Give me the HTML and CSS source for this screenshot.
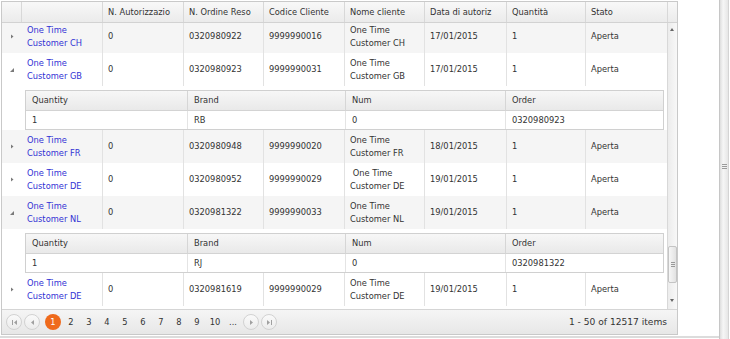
FILE: index.html
```html
<!DOCTYPE html>
<html>
  <head>
    <title>Autorizzazioni reso</title>
    <link rel="stylesheet" href="styles.css">
  </head>
  <body>
    <div class="page">
      <div class="panel">
        <div class="grid">
          <div class="grid-header">
            <table class="grid-table">
              <colgroup>
                <col class="c-hier"><col class="c-name"><col class="c-81"><col class="c-80"><col class="c-81"><col class="c-80"><col class="c-82"><col class="c-79"><col class="c-82">
              </colgroup>
              <thead>
                <tr>
                  <th class="hier"></th>
                  <th></th>
                  <th>N. Autorizzazio</th>
                  <th>N. Ordine Reso</th>
                  <th>Codice Cliente</th>
                  <th>Nome cliente</th>
                  <th>Data di autoriz</th>
                  <th>Quantità</th>
                  <th>Stato</th>
                </tr>
              </thead>
            </table>
            <div class="scroll-head"></div>
          </div>

          <div class="grid-body">
            <div class="grid-content">
              <table class="grid-table scrolled">
                <colgroup>
                  <col class="c-hier"><col class="c-name"><col class="c-81"><col class="c-80"><col class="c-81"><col class="c-80"><col class="c-82"><col class="c-79"><col class="c-82">
                </colgroup>
                <tbody>
                  <tr class="row alt">
                    <td class="hier"><svg class="ico" width="4" height="5" viewBox="0 0 4 5"><path d="M1 0.5L3.5 2.5L1 4.5Z" fill="#7a7a7a"/></svg></td>
                    <td class="name">One Time<br>Customer CH</td>
                    <td>0</td><td>0320980922</td><td>9999990016</td>
                    <td>One Time<br>Customer CH</td>
                    <td>17/01/2015</td><td>1</td><td>Aperta</td>
                  </tr>
                  <tr class="row">
                    <td class="hier"><svg class="ico" width="4" height="4" viewBox="0 0 4 4"><path d="M4 0V4H0Z" fill="#7a7a7a"/></svg></td>
                    <td class="name">One Time<br>Customer GB</td>
                    <td>0</td><td>0320980923</td><td>9999990031</td>
                    <td>One Time<br>Customer GB</td>
                    <td>17/01/2015</td><td>1</td><td>Aperta</td>
                  </tr>
                  <tr class="detail-row">
                    <td class="hier"></td>
                    <td class="detail-cell" colspan="8">
                      <table class="detail-table">
                        <colgroup><col class="d-1"><col class="d-2"><col class="d-3"><col class="d-4"></colgroup>
                        <thead>
                          <tr><th>Quantity</th><th>Brand</th><th>Num</th><th>Order</th></tr>
                        </thead>
                        <tbody>
                          <tr><td>1</td><td>RB</td><td>0</td><td>0320980923</td></tr>
                        </tbody>
                      </table>
                    </td>
                  </tr>
                  <tr class="row alt">
                    <td class="hier"><svg class="ico" width="4" height="5" viewBox="0 0 4 5"><path d="M1 0.5L3.5 2.5L1 4.5Z" fill="#7a7a7a"/></svg></td>
                    <td class="name">One Time<br>Customer FR</td>
                    <td>0</td><td>0320980948</td><td>9999990020</td>
                    <td>One Time<br>Customer FR</td>
                    <td>18/01/2015</td><td>1</td><td>Aperta</td>
                  </tr>
                  <tr class="row">
                    <td class="hier"><svg class="ico" width="4" height="5" viewBox="0 0 4 5"><path d="M1 0.5L3.5 2.5L1 4.5Z" fill="#7a7a7a"/></svg></td>
                    <td class="name">One Time<br>Customer DE</td>
                    <td>0</td><td>0320980952</td><td>9999990029</td>
                    <td>&nbsp;One Time<br>Customer DE</td>
                    <td>19/01/2015</td><td>1</td><td>Aperta</td>
                  </tr>
                  <tr class="row alt">
                    <td class="hier"><svg class="ico" width="4" height="4" viewBox="0 0 4 4"><path d="M4 0V4H0Z" fill="#7a7a7a"/></svg></td>
                    <td class="name">One Time<br>Customer NL</td>
                    <td>0</td><td>0320981322</td><td>9999990033</td>
                    <td>One Time<br>Customer NL</td>
                    <td>19/01/2015</td><td>1</td><td>Aperta</td>
                  </tr>
                  <tr class="detail-row">
                    <td class="hier"></td>
                    <td class="detail-cell" colspan="8">
                      <table class="detail-table">
                        <colgroup><col class="d-1"><col class="d-2"><col class="d-3"><col class="d-4"></colgroup>
                        <thead>
                          <tr><th>Quantity</th><th>Brand</th><th>Num</th><th>Order</th></tr>
                        </thead>
                        <tbody>
                          <tr><td>1</td><td>RJ</td><td>0</td><td>0320981322</td></tr>
                        </tbody>
                      </table>
                    </td>
                  </tr>
                  <tr class="row">
                    <td class="hier"><svg class="ico" width="4" height="5" viewBox="0 0 4 5"><path d="M1 0.5L3.5 2.5L1 4.5Z" fill="#7a7a7a"/></svg></td>
                    <td class="name">One Time<br>Customer DE</td>
                    <td>0</td><td>0320981619</td><td>9999990029</td>
                    <td>One Time<br>Customer DE</td>
                    <td>19/01/2015</td><td>1</td><td>Aperta</td>
                  </tr>
                </tbody>
              </table>
            </div>

            <div class="vscroll">
              <svg class="arrow-up" width="4" height="3" viewBox="0 0 4 3"><path d="M0 3L2 0L4 3Z" fill="#666"/></svg>
              <div class="thumb">
                <svg width="4" height="5" viewBox="0 0 4 5"><path d="M0 0.5h4M0 2.5h4M0 4.5h4" stroke="#999" stroke-width="1"/></svg>
              </div>
              <svg class="arrow-down" width="4" height="3" viewBox="0 0 4 3"><path d="M0 0L2 3L4 0Z" fill="#666"/></svg>
            </div>
          </div>

          <div class="pager">
            <a class="pager-btn" href="#"><svg width="5" height="5" viewBox="0 0 5 5"><path d="M0 0h1v5H0zM5 0v5L2 2.5z" fill="#a0a0a0"/></svg></a>
            <a class="pager-btn" href="#"><svg width="3" height="5" viewBox="0 0 3 5"><path d="M3 0v5L0 2.5z" fill="#a0a0a0"/></svg></a>
            <ul class="pager-nums">
              <li><span class="current">1</span></li>
              <li><a href="#">2</a></li>
              <li><a href="#">3</a></li>
              <li><a href="#">4</a></li>
              <li><a href="#">5</a></li>
              <li><a href="#">6</a></li>
              <li><a href="#">7</a></li>
              <li><a href="#">8</a></li>
              <li><a href="#">9</a></li>
              <li><a href="#">10</a></li>
              <li><a href="#">...</a></li>
            </ul>
            <a class="pager-btn" href="#"><svg width="3" height="5" viewBox="0 0 3 5"><path d="M0 0v5L3 2.5z" fill="#a0a0a0"/></svg></a>
            <a class="pager-btn" href="#"><svg width="5" height="5" viewBox="0 0 5 5"><path d="M0 0v5L3 2.5zM4 0h1v5H4z" fill="#a0a0a0"/></svg></a>
            <span class="pager-info">1 - 50 of 12517 items</span>
          </div>
        </div>
      </div>

      <div class="splitter">
        <svg width="5" height="5" viewBox="0 0 5 5"><path d="M0 0.5h5M0 2.5h5M0 4.5h5" stroke="#9a9a9a" stroke-width="1"/></svg>
      </div>
    </div>
  </body>
</html>
```

FILE: styles.css
```css
* { box-sizing: border-box; }
body {
  margin: 0;
  background: white;
  font-family: "DejaVu Sans", Verdana, sans-serif;
  font-size: 8.3px;
  color: #333;
}
a {
  color: inherit;
  text-decoration: none;
}
.page {
  display: flex;
  width: 730px;
  height: 339px;
}
.panel {
  width: 719px;
  height: 338px;
  padding: 1px 0 0 1px;
  border-bottom: 2px solid #dcdcdc;
}
.grid {
  width: 677px;
  border: 1px solid #c9c9c9;
  background: white;
}

/* header */
.grid-header {
  display: flex;
  height: 21px;
  background: linear-gradient(#f8f8f8, #ebebeb);
  border-bottom: 1px solid #d2d2d2;
}
.grid-table {
  width: 665px;
  table-layout: fixed;
  border-spacing: 0;
  flex: none;
}
.c-hier { width: 19px; }
.c-name { width: 81px; }
.c-79 { width: 79px; }
.c-80 { width: 80px; }
.c-81 { width: 81px; }
.c-82 { width: 82px; }
.grid-table th {
  height: 20px;
  padding: 0 5px;
  font-weight: normal;
  text-align: left;
  white-space: nowrap;
  overflow: hidden;
  border-left: 1px solid #d8d8d8;
}
.grid-table th.hier {
  border-left: none;
}
.scroll-head {
  width: 10px;
  border-left: 1px solid #d8d8d8;
}

/* body */
.grid-body {
  display: flex;
  height: 286px;
}
.grid-content {
  width: 665px;
  height: 286px;
  overflow: hidden;
}
/* content is scrolled a few pixels down */
.grid-table.scrolled {
  margin-top: -3px;
}
.grid-table td {
  padding: 0 5px;
  line-height: 13px;
  vertical-align: middle;
  white-space: nowrap;
  overflow: hidden;
  border-left: 1px solid #e2e2e2;
}
.row td {
  height: 33px;
}
.row.alt {
  background: #f5f5f5;
}
.grid-table td.hier {
  padding: 0;
  text-align: center;
  border-left: none;
}
.grid-table td.name {
  padding-left: 6px;
  color: #3131d4;
  border-left: none;
}
.ico {
  display: block;
  margin: 0 auto;
}

/* detail */
.detail-row {
  background: white;
}
.grid-table td.detail-cell {
  padding: 4px 5px 0 4px;
  border-left: none;
}
.detail-table {
  width: 637px;
  table-layout: fixed;
  border-spacing: 0;
  border: 1px solid #d0d0d0;
}
.d-1 { width: 161px; }
.d-2 { width: 158px; }
.d-3 { width: 160px; }
.d-4 { width: 158px; }
.detail-table th {
  height: 20px;
  padding: 0 6px;
  font-weight: normal;
  text-align: left;
  background: linear-gradient(#f7f7f7, #e9e9e9);
  border-bottom: 1px solid #d3d3d3;
  border-left: 1px solid #d6d6d6;
}
.detail-table td {
  height: 18px;
  padding: 0 6px;
  border-left: 1px solid #e4e4e4;
}
.detail-table th:first-child,
.detail-table td:first-child {
  border-left: none;
}

/* scrollbar */
.vscroll {
  position: relative;
  width: 10px;
  border-left: 1px solid #d8d8d8;
  background: linear-gradient(90deg, #ececec, #f8f8f8);
}
.arrow-up,
.arrow-down {
  position: absolute;
  left: 2px;
}
.arrow-up { top: 5px; }
.arrow-down { bottom: 7px; }
.thumb {
  position: absolute;
  top: 223px;
  left: 0;
  width: 9px;
  height: 37px;
  border: 1px solid #c4c4c4;
  border-radius: 2px;
  background: linear-gradient(90deg, #f6f6f6, #e2e2e2);
  display: flex;
  align-items: center;
  justify-content: center;
}

/* pager */
.pager {
  display: flex;
  align-items: center;
  height: 25px;
  padding: 0 10px 0 3px;
  border-top: 1px solid #d5d5d5;
  background: linear-gradient(#f5f5f5, #e7e7e7);
}
.pager-btn {
  display: flex;
  align-items: center;
  justify-content: center;
  width: 16px;
  height: 16px;
  margin: 0 1px;
  border: 1px solid #d2d2d2;
  border-radius: 50%;
  background: linear-gradient(#fafafa, #ececec);
}
.pager-nums {
  display: flex;
  margin: 0 0 0 3px;
  padding: 0;
  list-style: none;
}
.pager-nums li a,
.pager-nums li span {
  display: block;
  width: 16px;
  height: 16px;
  margin: 0 1px;
  line-height: 16px;
  text-align: center;
  border-radius: 50%;
}
.pager-nums .current {
  background: #ef6a1c;
  color: white;
}
.pager-info {
  margin-left: auto;
  font-size: 9.1px;
}

/* side splitter */
.splitter {
  display: flex;
  align-items: center;
  justify-content: center;
  width: 10px;
  height: 339px;
  padding-bottom: 6px;
  border-left: 1px solid #c6c6c6;
  border-right: 1px solid #d4d4d4;
  background: linear-gradient(90deg, #dedede, #f6f6f6 40%, #e6e6e6);
}
```
